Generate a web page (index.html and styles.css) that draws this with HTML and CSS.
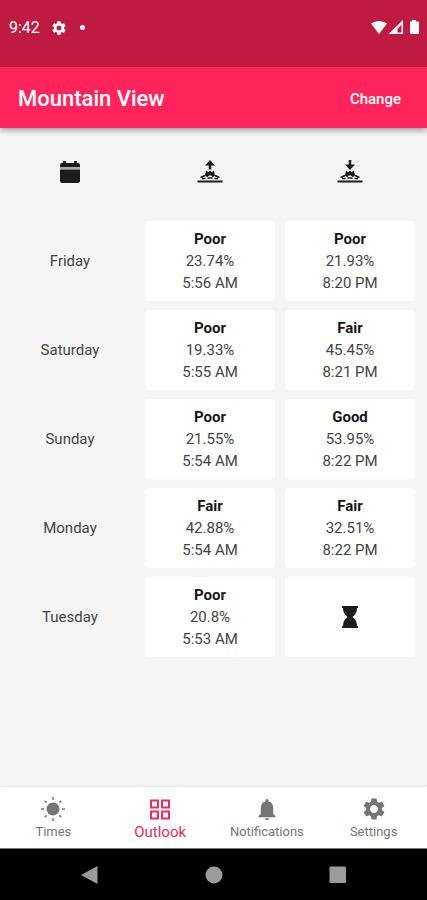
FILE: index.html
```html
<!DOCTYPE html>
<html lang="en">
<head>
<meta charset="utf-8">
<meta name="viewport" content="width=device-width, initial-scale=1">
<title>Mountain View</title>
<link rel="stylesheet" href="styles.css">
</head>
<body>
<svg class="defs" aria-hidden="true">
  <symbol id="gear" viewBox="2 2 20 20"><path d="M19.14 12.94c.04-.3.06-.61.06-.94 0-.32-.02-.64-.07-.94l2.03-1.58c.18-.14.23-.41.12-.61l-1.92-3.32c-.12-.22-.37-.29-.59-.22l-2.39.96c-.5-.38-1.03-.7-1.62-.94l-.36-2.54c-.04-.24-.24-.41-.48-.41h-3.84c-.24 0-.43.17-.47.41l-.36 2.54c-.59.24-1.13.57-1.62.94l-2.39-.96c-.22-.08-.47 0-.59.22L2.74 8.870c-.12.21-.08.47.12.61l2.03 1.58c-.05.3-.09.63-.09.94s.02.64.07.94l-2.03 1.58c-.18.14-.23.41-.12.61l1.92 3.32c.12.22.37.29.59.22l2.39-.96c.5.38 1.03.7 1.62.94l.36 2.54c.05.24.24.41.48.41h3.84c.24 0 .44-.17.47-.41l.36-2.54c.59-.24 1.13-.56 1.62-.94l2.39.96c.22.08.47 0 .59-.22l1.92-3.32c.12-.22.07-.47-.12-.61l-2.01-1.58zM12 15.6c-1.980 0-3.600-1.620-3.600-3.600s1.620-3.600 3.600-3.600 3.600 1.620 3.600 3.600-1.620 3.600-3.600 3.600z"/></symbol>
  <symbol id="horizon" viewBox="0 0 26 24"><path fill-rule="evenodd" d="M8 16L9 10.500L11.300 12.300L13 10.500L14.700 12.300L17 10.500L18 16L15.500 17Q13 13.500 10.500 17Z"/><path class="stroke" d="M3.500 17.500L8 15.500M18 15.500L22.500 17.500M5 18.500H8.500M10.500 18H15.500M17.500 18.500H21"/><path class="line" d="M.5 21.500H25.500"/></symbol>
</svg>
<header>
  <div class="status">
    <span class="clock">9:42</span>
    <svg class="status-gear"><use href="#gear"/></svg>
    <span class="dot"></span>
    <svg class="signals" viewBox="0 0 48 16" aria-hidden="true">
      <path d="M0 3.500Q8-1.500 16 3.500L8 14Z"/>
      <path fill-rule="evenodd" d="M17.500 14L32 0V14ZM26.500 12.500H30.500V4.500L26.500 9Z"/>
      <path d="M39 1.500H41V0H45V1.500H47Q48 1.500 48 2.500V13Q48 14 47 14H40Q39 14 39 13Z"/>
    </svg>
  </div>
  <div class="appbar">
    <h1>Mountain View</h1>
    <button type="button" class="change">Change</button>
  </div>
</header>
<main>
  <table>
    <thead>
      <tr>
        <th scope="col" aria-label="Day"><svg class="icon" viewBox="0 0 24 24"><path d="M2 5Q2 3 4 3H5V1H8V3H16V1H19V3H20Q22 3 22 5V7H2Z"/><path class="band" d="M2 7H22V9.500H2Z"/><path d="M2 9.500H22V21Q22 23 20 23H4Q2 23 2 21Z"/></svg></th>
        <th scope="col" aria-label="Sunrise"><svg class="icon sun" viewBox="0 0 26 24"><path d="M13 0L18 5.500H14.300V9.500H11.700V5.500H8Z"/><use href="#horizon"/></svg></th>
        <th scope="col" aria-label="Sunset"><svg class="icon sun" viewBox="0 0 26 24"><path d="M13 10L8 4.500H11.700V0H14.300V4.500H18Z"/><use href="#horizon"/></svg></th>
      </tr>
    </thead>
    <tbody>
      <tr><th scope="row">Friday</th><td><div class="card"><b>Poor</b><span>23.74%</span><span>5:56 AM</span></div></td><td><div class="card"><b>Poor</b><span>21.93%</span><span>8:20 PM</span></div></td></tr>
      <tr><th scope="row">Saturday</th><td><div class="card"><b>Poor</b><span>19.33%</span><span>5:55 AM</span></div></td><td><div class="card"><b>Fair</b><span>45.45%</span><span>8:21 PM</span></div></td></tr>
      <tr><th scope="row">Sunday</th><td><div class="card"><b>Poor</b><span>21.55%</span><span>5:54 AM</span></div></td><td><div class="card"><b>Good</b><span>53.95%</span><span>8:22 PM</span></div></td></tr>
      <tr><th scope="row">Monday</th><td><div class="card"><b>Fair</b><span>42.88%</span><span>5:54 AM</span></div></td><td><div class="card"><b>Fair</b><span>32.51%</span><span>8:22 PM</span></div></td></tr>
      <tr><th scope="row">Tuesday</th><td><div class="card"><b>Poor</b><span>20.8%</span><span>5:53 AM</span></div></td><td><div class="card"><svg class="icon" viewBox="0 0 24 24" role="img" aria-label="Pending"><path d="M4 1H20V3H19Q19 9 14.500 12Q19 15 19 21H20V23H4V21H5Q5 15 9.500 12Q5 9 5 3H4Z"/></svg></div></td></tr>
    </tbody>
  </table>
</main>
<nav class="tabs">
  <a href="#times"><svg viewBox="0 0 24 24"><circle cx="12" cy="12" r="6.500"/><path class="rays" d="M12 0V3M12 21V24M0 12H3M21 12H24M3.800 3.800L5.600 5.600M18.400 18.400L20.200 20.200M3.800 20.200L5.600 18.400M18.400 5.600L20.200 3.800"/></svg><span>Times</span></a>
  <a href="#outlook" class="active" aria-current="page"><svg viewBox="0 0 24 24"><path class="tiles" d="M3 3.500H10V10.500H3ZM14 3.500H21V10.500H14ZM3 14.500H10V21.500H3ZM14 14.500H21V21.500H14Z"/></svg><span>Outlook</span></a>
  <a href="#notifications"><svg viewBox="0 0 24 24"><path d="M12 23c1.200 0 2.200-.7 2.200-1.800H9.800c0 1.100 1 1.800 2.200 1.800zM18.200 17V11c0-3.500-1.700-5.800-4.600-6.500V3.500a1.600 1.600 0 0 0-3.200 0v1C7.500 5.200 5.800 7.500 5.800 11v6L3.500 19v1.200h17V19z"/></svg><span>Notifications</span></a>
  <a href="#settings"><svg viewBox="0 0 24 24"><use href="#gear" x="1" y="1" width="22" height="22"/></svg><span>Settings</span></a>
</nav>
<div class="system">
  <button type="button" aria-label="Back"><svg viewBox="0 0 18 18"><path d="M0 9L16.500 0V18Z"/></svg></button>
  <button type="button" aria-label="Home"><svg viewBox="0 0 18 18"><circle cx="9" cy="9" r="8.500"/></svg></button>
  <button type="button" aria-label="Recent apps"><svg viewBox="0 0 18 18"><rect x=".5" y=".5" width="16.500" height="16.500" rx="1"/></svg></button>
</div>
</body>
</html>
```
FILE: styles.css
```css
* { box-sizing: border-box; }
body {
  margin: 0;
  min-height: 100vh;
  display: flex;
  flex-direction: column;
  background: #f5f5f5;
  color: #444;
  font: 15px/22px Roboto, sans-serif;
}
.defs { position: absolute; width: 0; height: 0; }
svg { display: block; overflow: visible; fill: currentColor; }
button { border: 0; padding: 0; background: none; color: inherit; font: inherit; }

header { color: #fff; box-shadow: 0 2px 6px rgba(0, 0, 0, .4); }
.status {
  display: flex;
  align-items: center;
  height: 67px;
  padding: 0 8px 12px 9px;
  background: #bf1a42;
}
.clock { font-size: 16px; }
.status-gear { width: 14px; height: 14px; margin: 0 14px 0 12px; }
.dot { width: 5px; height: 5px; border-radius: 50%; background: #fff; }
.signals { width: 48px; height: 16px; margin: 0 0 0 auto; }
.appbar {
  display: flex;
  align-items: center;
  justify-content: space-between;
  height: 61px;
  padding: 2px 26px 0 18px;
  background: #ff255c;
}
h1 { margin: 0; font-size: 22px; font-weight: 500; line-height: 28px; }
.change { font-size: 15px; font-weight: 500; }

main { flex: 1; padding-right: 7px; }
table { width: 100%; table-layout: fixed; border-collapse: collapse; }
tr { height: 89px; }
th, td { padding: 4px 5px 5px; text-align: center; font-weight: 400; }
.card {
  display: flex;
  flex-direction: column;
  align-items: center;
  justify-content: center;
  height: 80px;
  border-radius: 4px;
  background: #fff;
}
b { color: #161616; font-weight: 700; }
.icon { width: 24px; height: 24px; margin: 0 auto; color: #1c1c1c; }
.card .icon { margin: 0; }
.sun { width: 26px; }
.band { fill: #aaa; }
.stroke { fill: none; stroke: currentColor; stroke-width: 1.5; }
.line { fill: none; stroke: currentColor; stroke-width: 2; }

.tabs { display: flex; height: 61px; background: #fff; box-shadow: 0 -1px 2px rgba(0, 0, 0, .08); }
.tabs a {
  flex: 1;
  display: flex;
  flex-direction: column;
  align-items: center;
  padding-top: 10px;
  color: #757575;
  font-size: 13px;
  text-decoration: none;
}
.tabs svg { width: 24px; height: 24px; }
.tabs span { line-height: 22px; }
.tabs .active { color: #ee2b5c; font-size: 15px; }
.tiles { fill: none; stroke: currentColor; stroke-width: 2; }
.rays { fill: none; stroke: currentColor; stroke-width: 1.5; }

.system {
  display: flex;
  align-items: center;
  justify-content: center;
  gap: 106px;
  height: 52px;
  border-top: 1px solid #777;
  background: #000;
  color: #9b9b9b;
}
.system svg { width: 18px; height: 18px; }
```
